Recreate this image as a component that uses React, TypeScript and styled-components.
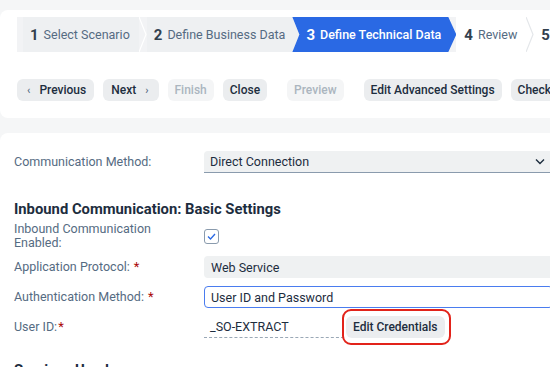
import React from "react";
import styled, { createGlobalStyle } from "styled-components";

const GlobalStyle = createGlobalStyle`
  html, body {
    margin: 0;
    padding: 0;
    background: #f5f6f7;
  }
  body {
    font-family: Roboto, "Liberation Sans", Arial, sans-serif;
    color: #1d2d3e;
  }
`;

const Page = styled.div`
  width: 550px;
  height: 367px;
  overflow: hidden;
  background: #f5f6f7;
  padding-top: 10px;
  box-sizing: border-box;
`;

const Card = styled.div<{ $pad: string }>`
  background: #ffffff;
  width: 600px;
  border-radius: 8px;
  padding: ${(p) => p.$pad};
  box-sizing: border-box;
`;

/* wizard steps */
const Steps = styled.div`
  display: flex;
  align-items: stretch;
  height: 35px;
  background: #f2f3f5;
  padding-left: 6px;
  width: 560px;
`;

const Step = styled.div<{ $kind: "done" | "active" | "next" }>`
  position: relative;
  display: flex;
  align-items: center;
  gap: 5px;
  padding: ${(p) => (p.$kind === "active" ? "0 15px 0 14px" : "0 9px 0 7px")};
  background: ${(p) =>
    p.$kind === "done" ? "#eef0f2" : p.$kind === "active" ? "#2a69e4" : "#ffffff"};
  color: ${(p) => (p.$kind === "active" ? "#ffffff" : "#556b82")};
  margin-left: ${(p) => (p.$kind === "active" ? "-7px" : "0")};
  clip-path: ${(p) =>
    p.$kind === "active"
      ? "polygon(0 0, calc(100% - 8px) 0, 100% 50%, calc(100% - 8px) 100%, 0 100%, 7px 50%)"
      : "none"};
  z-index: ${(p) => (p.$kind === "active" ? 2 : 1)};
  white-space: nowrap;
`;

const StepNum = styled.span<{ $active?: boolean }>`
  font-size: 15px;
  font-weight: 700;
  color: ${(p) => (p.$active ? "#ffffff" : "#32404e")};
`;

const StepLabel = styled.span<{ $active?: boolean }>`
  font-size: 12.5px;
  font-weight: ${(p) => (p.$active ? 500 : 400)};
`;

const Chevron = styled.svg`
  flex: none;
  width: 8px;
  height: 35px;
`;

const WhiteTail = styled.div`
  flex: 1;
  display: flex;
  align-items: stretch;
  background: #ffffff;
`;

/* toolbar */
const Toolbar = styled.div`
  display: flex;
  align-items: center;
  gap: 9px;
  margin-top: 27px;
  height: 22px;
  white-space: nowrap;
`;

const Button = styled.button<{ $disabled?: boolean }>`
  flex: none;
  height: 22px;
  border: none;
  border-radius: 6px;
  padding: 0 7px;
  display: flex;
  align-items: center;
  gap: 9px;
  font-family: inherit;
  font-size: 12px;
  font-weight: 500;
  background: ${(p) => (p.$disabled ? "#f4f5f6" : "#ebedef")};
  color: ${(p) => (p.$disabled ? "#abb5bf" : "#1d2d3e")};
`;

const Arrow = styled.span`
  font-size: 11px;
  color: #556b82;
`;

const Sep = styled.span`
  width: 1px;
  height: 16px;
  background: #d5dadd;
  margin: 0 1px;
`;

/* form */
const Form = styled.div`
  display: flex;
  flex-direction: column;
  width: 539px;
`;

const Row = styled.div<{ $h: number; $mt: number }>`
  display: grid;
  grid-template-columns: 190px 1fr;
  align-items: center;
  min-height: ${(p) => p.$h}px;
  margin-top: ${(p) => p.$mt}px;
`;

const Label = styled.div`
  font-size: 12.5px;
  line-height: 14px;
  color: #556b82;
`;

const Star = styled.span<{ $tight?: boolean }>`
  color: #aa0808;
  margin-left: ${(p) => (p.$tight ? "1px" : "4px")};
  font-size: 13px;
`;

const Heading = styled.h3<{ $mt: number }>`
  margin: ${(p) => p.$mt}px 0 0;
  font-size: 14.8px;
  font-weight: 700;
  color: #1d2d3e;
  line-height: 18px;
  white-space: nowrap;
`;

const Select = styled.div`
  height: 21px;
  background: #eff1f2;
  border-bottom: 1px solid #8a9bad;
  border-radius: 4px 4px 0 0;
  display: flex;
  align-items: center;
  justify-content: space-between;
  padding: 0 8px 0 6px;
  font-size: 12.5px;
  color: #1d2d3e;
`;

const Field = styled.div<{ $focus?: boolean }>`
  height: 22px;
  box-sizing: border-box;
  background: ${(p) => (p.$focus ? "#ffffff" : "#eff1f2")};
  border: 1px solid ${(p) => (p.$focus ? "#4a7cef" : "transparent")};
  border-radius: 4px;
  display: flex;
  align-items: center;
  padding: 0 6px;
  font-size: 12.5px;
  color: #1d2d3e;
`;

const Check = styled.div`
  width: 13px;
  height: 13px;
  border: 1px solid #8a9bad;
  border-radius: 3px;
  display: flex;
  align-items: center;
  justify-content: center;
`;

const UserCell = styled.div`
  display: flex;
  align-items: center;
`;

const ReadOnly = styled.div`
  width: 134px;
  height: 22px;
  padding-left: 6px;
  border-bottom: 1px dashed #9aa8b6;
  display: flex;
  align-items: center;
  font-size: 12.5px;
  color: #1d2d3e;
`;

const Highlight = styled.div`
  margin-left: -2px;
  border: 2px solid #e2231a;
  border-radius: 9px;
  padding: 5px 4px 5px 2px;
`;

export default function App() {
  const sep = (stroke: string) => (
    <Chevron viewBox="0 0 8 35">
      <polyline points="0,0 7,17.5 0,35" fill="none" stroke={stroke} strokeWidth="1.2" />
    </Chevron>
  );

  return (
    <Page>
      <GlobalStyle />
      <Card $pad="7px 0 17px 17px">
        <Steps>
          <Step $kind="done">
            <StepNum>1</StepNum>
            <StepLabel>Select Scenario</StepLabel>
          </Step>
          {sep("#ffffff")}
          <Step $kind="done" style={{ paddingRight: 14 }}>
            <StepNum>2</StepNum>
            <StepLabel>Define Business Data</StepLabel>
          </Step>
          <Step $kind="active">
            <StepNum $active>3</StepNum>
            <StepLabel $active>Define Technical Data</StepLabel>
          </Step>
          <WhiteTail>
            <Step $kind="next" style={{ paddingLeft: 8 }}>
              <StepNum>4</StepNum>
              <StepLabel>Review</StepLabel>
            </Step>
            {sep("#e4e7ea")}
            <Step $kind="next">
              <StepNum>5</StepNum>
            </Step>
          </WhiteTail>
        </Steps>
        <Toolbar>
          <Button style={{ paddingLeft: 10, paddingRight: 8 }}>
            <Arrow>‹</Arrow>Previous
          </Button>
          <Button style={{ paddingLeft: 8, paddingRight: 10 }}>
            Next<Arrow>›</Arrow>
          </Button>
          <Button $disabled>Finish</Button>
          <Button>Close</Button>
          <Sep />
          <Button $disabled>Preview</Button>
          <Sep />
          <Button>Edit Advanced Settings</Button>
          <Button>Check Configuration</Button>
        </Toolbar>
      </Card>

      <Card $pad="18px 0 0 14px" style={{ marginTop: 15, height: 260 }}>
        <Form>
          <Row $h={22} $mt={0}>
            <Label>Communication Method:</Label>
            <Select>
              <span>Direct Connection</span>
              <svg width="10" height="7" viewBox="0 0 10 7">
                <polyline points="1,1.5 5,5.5 9,1.5" fill="none" stroke="#1d2d3e" strokeWidth="1.4" />
              </svg>
            </Select>
          </Row>
          <Heading $mt={27}>Inbound Communication: Basic Settings</Heading>
          <Row $h={28} $mt={4}>
            <Label>
              Inbound Communication
              <br />
              Enabled:
            </Label>
            <Check>
              <svg width="9" height="7" viewBox="0 0 9 7">
                <polyline points="1,3.5 3.5,6 8,1" fill="none" stroke="#2a69e4" strokeWidth="1.3" />
              </svg>
            </Check>
          </Row>
          <Row $h={22} $mt={6}>
            <Label>
              Application Protocol:<Star>*</Star>
            </Label>
            <Field>Web Service</Field>
          </Row>
          <Row $h={22} $mt={8}>
            <Label>
              Authentication Method:<Star>*</Star>
            </Label>
            <Field $focus>User ID and Password</Field>
          </Row>
          <Row $h={37} $mt={0}>
            <Label>
              User ID:<Star $tight>*</Star>
            </Label>
            <UserCell>
              <ReadOnly>_SO-EXTRACT</ReadOnly>
              <Highlight>
                <Button>Edit Credentials</Button>
              </Highlight>
            </UserCell>
          </Row>
          <Heading $mt={16}>Services Used</Heading>
        </Form>
      </Card>
    </Page>
  );
}
